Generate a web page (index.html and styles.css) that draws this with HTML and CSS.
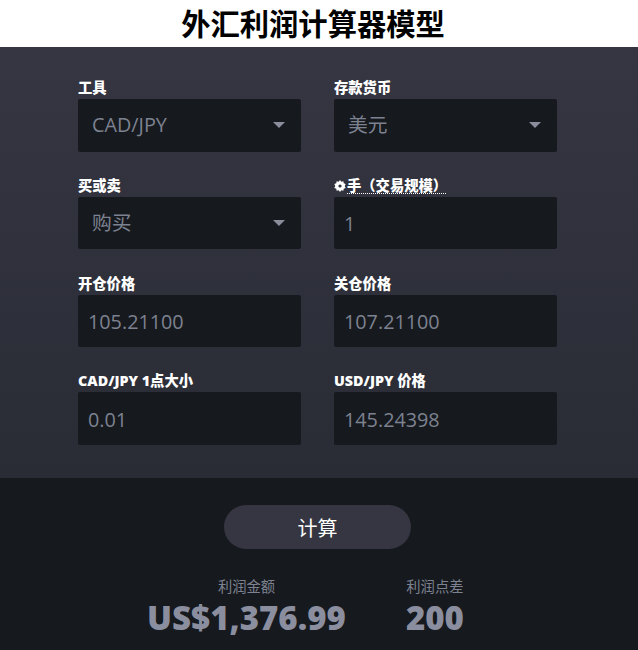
FILE: index.html
```html
<!DOCTYPE html>
<html lang="zh-CN">
<head>
    <meta charset="UTF-8">
    <meta name="viewport" content="width=device-width, initial-scale=1.0">
    <title>外汇利润计算器模型</title>
    <link rel="stylesheet" href="styles.css">
</head>
<body>
    <h1 class="page-title">外汇利润计算器模型</h1>

    <section class="calc-form">
        <div class="field">
            <label class="field-label">工具</label>
            <div class="field-box">
                <span class="select-text">CAD/JPY</span>
                <span class="caret"></span>
            </div>
        </div>
        <div class="field">
            <label class="field-label">存款货币</label>
            <div class="field-box">
                <span class="select-text cjk">美元</span>
                <span class="caret"></span>
            </div>
        </div>
        <div class="field">
            <label class="field-label">买或卖</label>
            <div class="field-box">
                <span class="select-text cjk">购买</span>
                <span class="caret"></span>
            </div>
        </div>
        <div class="field">
            <label class="field-label">
                <svg class="gear" viewBox="0 0 12 12" width="12" height="12">
                    <path fill="#fff" fill-rule="evenodd" d="M6 0l1.300 1.700 2.100-.5.3 2.100 2 .8L10.700 6l1 1.900-2 .8-.3 2.100-2.100-.5L6 12l-1.300-1.700-2.100.5-.3-2.100-2-.8L1.300 6l-1-1.900 2-.8.3-2.100 2.100.5zM6 4.400a1.600 1.600 0 1 0 0 3.200 1.600 1.600 0 0 0 0-3.200z"/>
                </svg><span class="dotted">手（交易规模）</span>
            </label>
            <div class="field-box"><span class="input-text lots">1</span></div>
        </div>
        <div class="field">
            <label class="field-label">开仓价格</label>
            <div class="field-box"><span class="input-text">105.21100</span></div>
        </div>
        <div class="field">
            <label class="field-label">关仓价格</label>
            <div class="field-box"><span class="input-text">107.21100</span></div>
        </div>
        <div class="field">
            <label class="field-label">CAD/JPY 1点大小</label>
            <div class="field-box"><span class="input-text">0.01</span></div>
        </div>
        <div class="field">
            <label class="field-label">USD/JPY 价格</label>
            <div class="field-box"><span class="input-text">145.24398</span></div>
        </div>
    </section>

    <section class="calc-result">
        <button class="calc-btn">计算</button>
        <div class="results">
            <div class="result">
                <div class="result-label">利润金额</div>
                <div class="result-value">US$1,376.99</div>
            </div>
            <div class="result">
                <div class="result-label">利润点差</div>
                <div class="result-value">200</div>
            </div>
        </div>
    </section>
</body>
</html>
```

FILE: styles.css
```css
* {
    box-sizing: border-box;
    font-family: "Open Sans", "Noto Sans CJK SC", sans-serif;
}
html, body {
    height: 100%;
}
body {
    margin: 0;
    background-color: #fff;
    overflow: hidden;
}
.page-title {
    margin: 0;
    height: 47px;
    padding-right: 12px;
    font-size: 29.300px;
    line-height: 48px;
    font-weight: 700;
    text-align: center;
    color: #000;
}
.calc-form {
    display: grid;
    grid-template-columns: 223px 223px;
    column-gap: 33px;
    row-gap: 24.300px;
    height: 431px;
    padding: 31.300px 0 0 78px;
    align-content: start;
    background: linear-gradient(#353641, #292b35);
}
.field {
    display: flex;
    flex-direction: column;
    height: 73.400px;
}
.field-label {
    height: 21px;
    font-size: 14.300px;
    line-height: 19px;
    font-weight: 800;
    color: #fff;
    white-space: nowrap;
}
.gear {
    vertical-align: -1px;
    margin-right: 1px;
}
.dotted {
    text-decoration: underline dotted #fff 1px;
    text-underline-offset: 2px;
}
.field-box {
    display: flex;
    align-items: center;
    justify-content: space-between;
    height: 52.400px;
    background-color: #16191e;
    border-radius: 2px;
    font-size: 19.800px;
    color: #7d8290;
}
.select-text {
    padding-left: 14px;
    padding-bottom: 2px;
}
.select-text.cjk {
    padding-bottom: 4px;
}
.input-text {
    padding-left: 10px;
    padding-top: 2px;
}
.input-text.lots {
    padding-top: 0;
}
.caret {
    width: 0;
    height: 0;
    margin-right: 16px;
    border-left: 6px solid transparent;
    border-right: 6px solid transparent;
    border-top: 6px solid #8a8e9c;
}
.calc-result {
    display: flex;
    flex-direction: column;
    align-items: center;
    height: 172px;
    padding-top: 27px;
    background-color: #16191e;
}
.calc-btn {
    width: 187px;
    height: 44px;
    margin-right: 3px;
    border: none;
    border-radius: 22px;
    background-color: #353641;
    font-size: 20px;
    color: #fff;
}
.results {
    display: flex;
    gap: 60px;
    margin-top: 27px;
    margin-right: 27px;
}
.result {
    text-align: center;
}
.result-label {
    font-size: 14.300px;
    line-height: 22px;
    color: #7d8290;
}
.result-value {
    font-size: 33px;
    line-height: 40px;
    font-weight: 800;
    color: #8a8e9f;
}
```
